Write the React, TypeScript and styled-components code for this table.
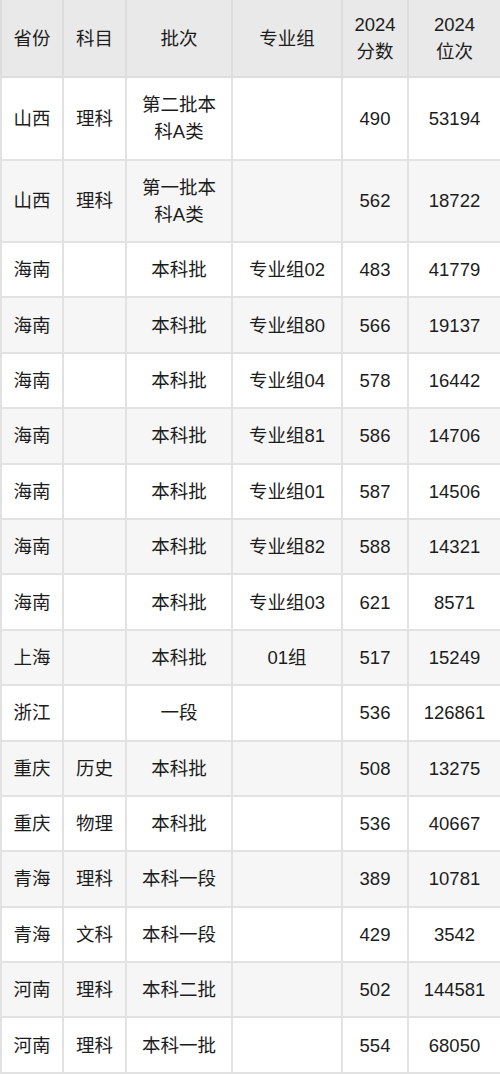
import React from "react";
import styled, { createGlobalStyle } from "styled-components";

const GlobalStyle = createGlobalStyle`
	html, body {
		margin: 0;
		padding: 0;
		background: #ffffff;
	}
	body {
		font-family: "Liberation Sans", "Noto Sans CJK SC", sans-serif;
		color: #1c1c1c;
	}
`;

type Row = {
	province: string;
	subject: string;
	batch: string[];
	group: string;
	score: string;
	rank: string;
};

const rows: Row[] = [
	{ province: "山西", subject: "理科", batch: ["第二批本", "科A类"], group: "", score: "490", rank: "53194" },
	{ province: "山西", subject: "理科", batch: ["第一批本", "科A类"], group: "", score: "562", rank: "18722" },
	{ province: "海南", subject: "", batch: ["本科批"], group: "专业组02", score: "483", rank: "41779" },
	{ province: "海南", subject: "", batch: ["本科批"], group: "专业组80", score: "566", rank: "19137" },
	{ province: "海南", subject: "", batch: ["本科批"], group: "专业组04", score: "578", rank: "16442" },
	{ province: "海南", subject: "", batch: ["本科批"], group: "专业组81", score: "586", rank: "14706" },
	{ province: "海南", subject: "", batch: ["本科批"], group: "专业组01", score: "587", rank: "14506" },
	{ province: "海南", subject: "", batch: ["本科批"], group: "专业组82", score: "588", rank: "14321" },
	{ province: "海南", subject: "", batch: ["本科批"], group: "专业组03", score: "621", rank: "8571" },
	{ province: "上海", subject: "", batch: ["本科批"], group: "01组", score: "517", rank: "15249" },
	{ province: "浙江", subject: "", batch: ["一段"], group: "", score: "536", rank: "126861" },
	{ province: "重庆", subject: "历史", batch: ["本科批"], group: "", score: "508", rank: "13275" },
	{ province: "重庆", subject: "物理", batch: ["本科批"], group: "", score: "536", rank: "40667" },
	{ province: "青海", subject: "理科", batch: ["本科一段"], group: "", score: "389", rank: "10781" },
	{ province: "青海", subject: "文科", batch: ["本科一段"], group: "", score: "429", rank: "3542" },
	{ province: "河南", subject: "理科", batch: ["本科二批"], group: "", score: "502", rank: "144581" },
	{ province: "河南", subject: "理科", batch: ["本科一批"], group: "", score: "554", rank: "68050" },
];

const widths = [62, 63, 106, 110, 66, 93];

export default function App() {
	return (
		<>
			<GlobalStyle />
			<Table>
				<colgroup>
					{widths.map((w, i) => (
						<col key={i} style={{ width: w }} />
					))}
				</colgroup>
				<thead>
					<HeadRow>
						<HeadCell>省份</HeadCell>
						<HeadCell>科目</HeadCell>
						<HeadCell>批次</HeadCell>
						<HeadCell>专业组</HeadCell>
						<HeadCell>
							2024
							<br />
							分数
						</HeadCell>
						<HeadCell>
							2024
							<br />
							位次
						</HeadCell>
					</HeadRow>
				</thead>
				<tbody>
					{rows.map((r, i) => (
						<BodyRow key={i} $striped={i % 2 === 1} $tall={r.batch.length > 1}>
							<Cell>{r.province}</Cell>
							<Cell>{r.subject}</Cell>
							<Cell>
								{r.batch.map((b, j) => (
									<React.Fragment key={j}>
										{j > 0 && <br />}
										{b}
									</React.Fragment>
								))}
							</Cell>
							<Cell>{r.group}</Cell>
							<Cell>{r.score}</Cell>
							<Cell>{r.rank}</Cell>
						</BodyRow>
					))}
				</tbody>
			</Table>
		</>
	);
}

const Table = styled.table`
	width: 500px;
	table-layout: fixed;
	border-collapse: collapse;
	font-size: 18.5px;
	line-height: 27px;
	border-left: 2px solid #e2e2e2;
	border-bottom: 2px solid #e2e2e2;
`;

const HeadRow = styled.tr`
	height: 77px;
	background: #e9e9e9;
`;

const HeadCell = styled.th`
	font-weight: normal;
	text-align: center;
	vertical-align: middle;
	padding: 0 2px;
	border: 2px solid #dddddd;
	border-top: none;
	color: #1c1c1c;
`;

const BodyRow = styled.tr<{ $striped: boolean; $tall: boolean }>`
	height: ${(p) => (p.$tall ? "82.5px" : "55.4px")};
	background: ${(p) => (p.$striped ? "#f6f6f6" : "#ffffff")};
`;

const Cell = styled.td`
	text-align: center;
	vertical-align: middle;
	padding: 0 2px;
	border: 2px solid #e2e2e2;
	white-space: nowrap;
`;
